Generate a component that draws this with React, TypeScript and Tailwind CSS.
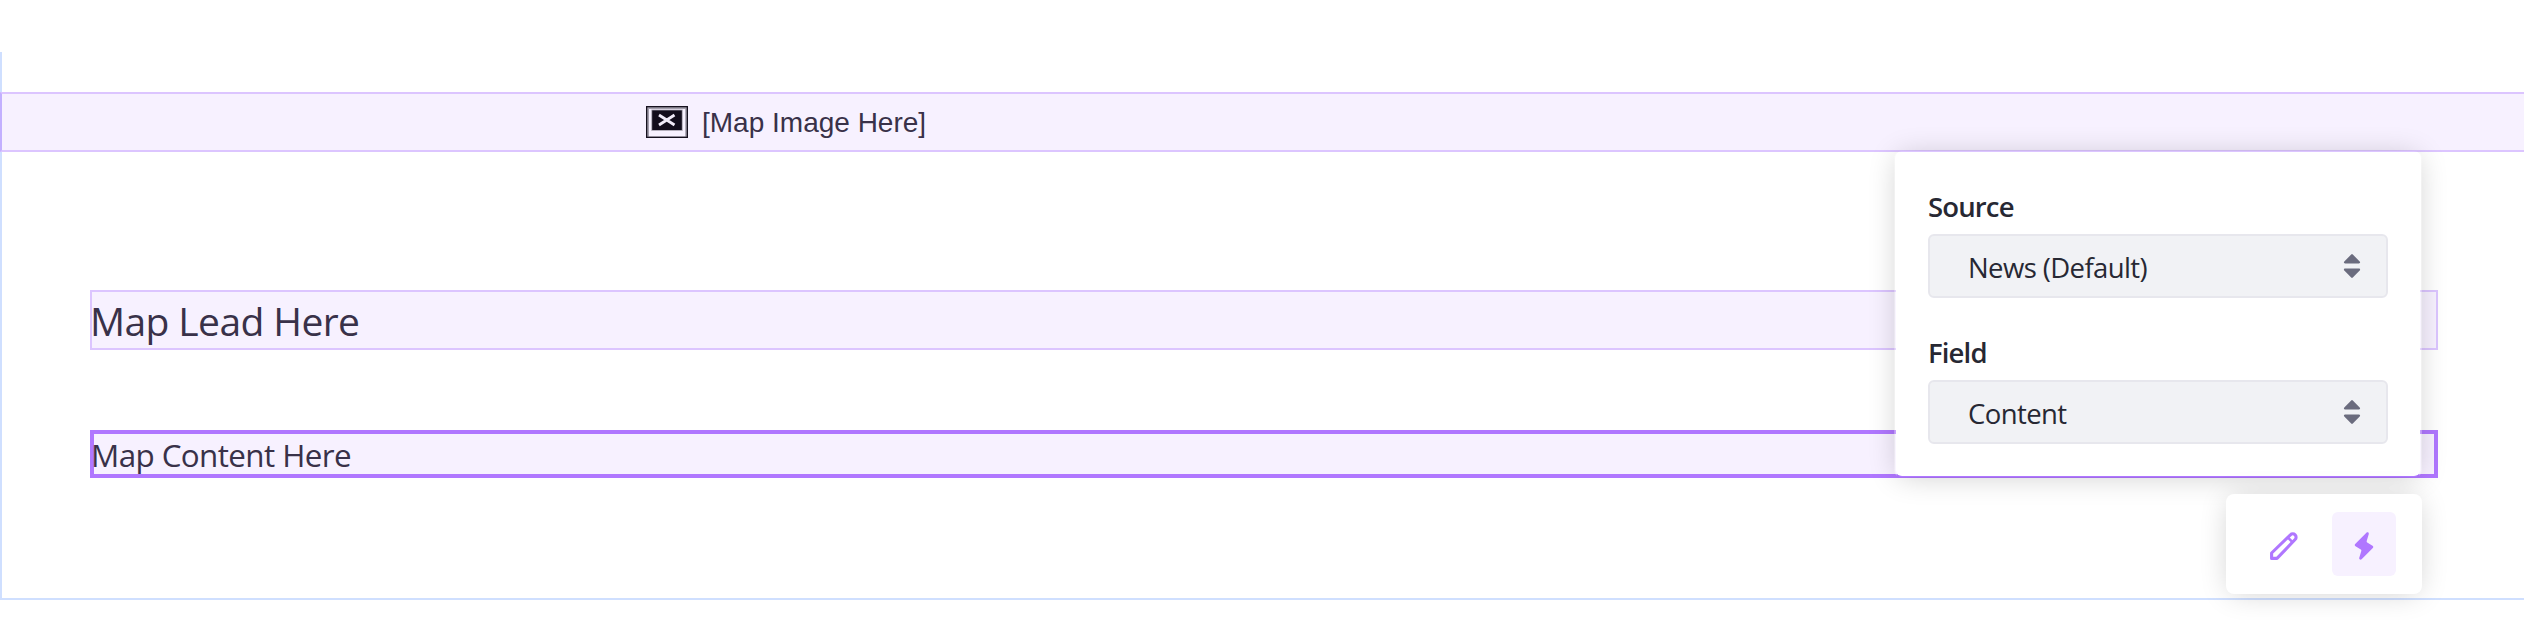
import React from "react";

function BrokenImageIcon() {
  return (
    <svg width="42" height="32" viewBox="0 0 42 32" className="shrink-0">
      <rect x="0" y="0" width="42" height="32" fill="#16111f" />
      <rect x="1.3" y="1.3" width="39.4" height="29.4" fill="#a39eac" />
      <rect x="3" y="3" width="36.2" height="27.2" fill="#f7f1ff" />
      <rect x="5.3" y="3.6" width="31.4" height="21.2" fill="#a39eac" />
      <rect x="6.2" y="4.4" width="29.6" height="19.6" fill="#120c1b" />
      <path d="M13 9 28.5 19M28.5 9 13 19" stroke="#f0eaf8" strokeWidth="2.8" fill="none" />
    </svg>
  );
}

function CaretDouble() {
  return (
    <svg width="18" height="26" viewBox="0 0 18 26" className="mr-[25px] shrink-0">
      <path
        d="M8.2 1.4a1.1 1.1 0 0 1 1.6 0l6.9 7c.8.9.4 2-.8 2H2.1c-1.2 0-1.6-1.1-.8-2zM8.2 24.6a1.1 1.1 0 0 0 1.6 0l6.9-7c.8-.9.4-2-.8-2H2.1c-1.2 0-1.6 1.1-.8 2z"
        fill="#6b6c7e"
      />
    </svg>
  );
}

function Pencil() {
  return (
    <svg width="28" height="28" viewBox="0 0 28 28" fill="none" stroke="#b077ff" strokeWidth="3.1" strokeLinejoin="round">
      <path d="M1.6 26.4V21L20.4 2.8a3.3 3.3 0 0 1 4.7 0 3.3 3.3 0 0 1 0 4.7L7 26.4z" />
      <path d="M17.8 5.4l4.9 4.9" strokeWidth="2.6" />
    </svg>
  );
}

function Bolt() {
  return (
    <svg width="20" height="28" viewBox="0 0 20 28">
      <path
        d="M12.4.7c1-.9 2.6-.2 2.4 1.2L12.7 9c-.2.8.2 1.4.9 1.8l4.9 2.9c.9.5 1 1.6.3 2.3L7.6 27.3c-1 1-2.6.2-2.4-1.2l2.1-7.1c.2-.8-.2-1.4-.9-1.8l-4.9-2.9c-.9-.5-1-1.6-.3-2.3z"
        fill="#b077ff"
      />
    </svg>
  );
}

function SelectField({ label, value }: { label: string; value: string }) {
  return (
    <div className="text-[27.5px] text-[#272833]">
      <div className="flex h-[56px] items-center pt-[2px] font-semibold tracking-[-0.85px]">{label}</div>
      <div className="flex h-16 items-center justify-between rounded-md border-2 border-[#e7e7ed] bg-[#f1f2f5] pl-[38px]">
        <span className="pt-[3px] tracking-[-0.6px]">{value}</span>
        <CaretDouble />
      </div>
    </div>
  );
}

export default function App() {
  return (
    <main className="relative h-[620px] overflow-hidden bg-white pt-[52px] font-['Open_Sans',sans-serif] text-[#393149]">
      <section className="h-[548px] border-b-2 border-l-2 border-[#cfdfff] pt-10">
        <div className="-ml-[2px] flex h-[60px] items-center border-y-2 border-l-2 border-y-[#dcc5ff] border-l-[#c3b0ff] bg-[#f7f1ff] pl-[644px] font-['Liberation_Sans',sans-serif] text-[28px]">
          <BrokenImageIcon />
          <span className="ml-[14px] pt-[2px]">[Map Image Here]</span>
        </div>
        <div className="mt-[138px] ml-[88px] flex w-[2348px] flex-col gap-20">
          <div className="flex h-[60px] items-center bg-[#f7f1ff] text-[39px] tracking-[-0.6px] shadow-[inset_0_0_0_2px_#dcc5ff]">
            <span className="pt-[3px]">Map Lead Here</span>
          </div>
          <div className="flex h-12 items-center bg-[#f7f1ff] text-[31.4px] tracking-[-0.6px] shadow-[inset_0_0_0_4px_#b077ff]">
            <span className="ml-px pt-[2px]">Map Content Here</span>
          </div>
        </div>
      </section>

      <div className="absolute top-[150px] left-[1894px] h-[328px] w-[528px] rounded-lg border-2 border-x-white/30 border-y-transparent bg-white bg-clip-padding px-8 pt-[26px] shadow-[0_2px_30px_-4px_rgba(0,0,0,0.2)]">
        <div className="flex flex-col gap-[26px]">
          <SelectField label="Source" value="News (Default)" />
          <SelectField label="Field" value="Content" />
        </div>
      </div>

      <div className="absolute top-[494px] left-[2226px] flex h-[100px] w-[196px] items-center justify-end gap-4 rounded-lg bg-white pr-[26px] shadow-[0_2px_30px_-4px_rgba(0,0,0,0.2)]">
        <button className="flex size-16 items-center justify-center pt-1" aria-label="Edit">
          <Pencil />
        </button>
        <button className="flex size-16 items-center justify-center rounded-md bg-[#f7f1ff] pt-1" aria-label="Mapping">
          <Bolt />
        </button>
      </div>
    </main>
  );
}
